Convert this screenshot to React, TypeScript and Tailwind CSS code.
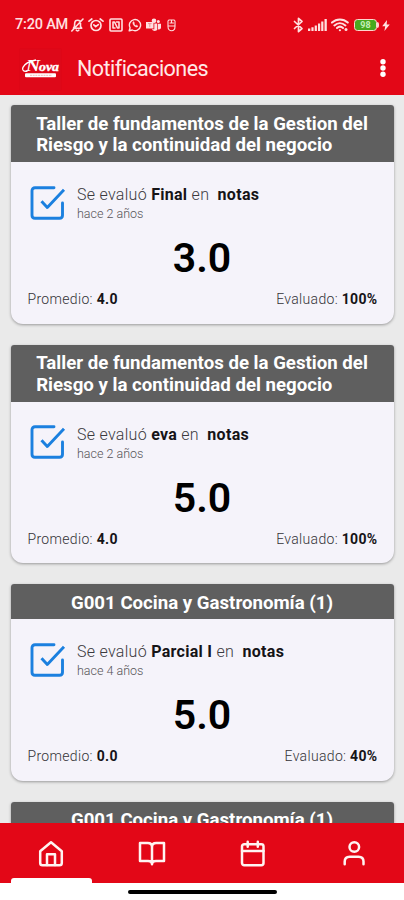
import React from "react";

type Note = {
  course: string[];
  item: string;
  when: string;
  grade: string;
  average: string;
  evaluated: string;
};

const taller = ["Taller de fundamentos de la Gestion del", "Riesgo y la continuidad del negocio"];
const cocina = ["G001 Cocina y Gastronomía (1)"];

const notes: Note[] = [
  { course: taller, item: "Final", when: "hace 2 años", grade: "3.0", average: "4.0", evaluated: "100%" },
  { course: taller, item: "eva", when: "hace 2 años", grade: "5.0", average: "4.0", evaluated: "100%" },
  { course: cocina, item: "Parcial I", when: "hace 4 años", grade: "5.0", average: "0.0", evaluated: "40%" },
  { course: cocina, item: "Parcial I", when: "hace 4 años", grade: "5.0", average: "0.0", evaluated: "40%" },
];

const stroke = {
  fill: "none",
  stroke: "currentColor",
  strokeLinecap: "round" as const,
  strokeLinejoin: "round" as const,
};

function StatusBar() {
  return (
    <div className="flex h-[49px] items-end justify-between pr-[14px] pb-[15px] pl-[15px] text-[#ffe0e0]">
      <div className="flex h-[18px] items-center">
        <span className="w-[56px] text-[14.5px] leading-[18px] font-medium tracking-[-0.2px] whitespace-nowrap">7:20 AM</span>
        <svg className="h-[14px] w-[13px]" viewBox="0 0 13 14" {...stroke} strokeWidth="1.6">
          <path d="M2.5 10.2h8.2L9.5 8.5V5.2c0-3.7-5.4-4-5.8-.2L3.5 8.3zM5.3 12.2c.6 1 1.9 1 2.5 0M.8 13 12 1" />
        </svg>
        <svg className="ml-[4px] h-[14px] w-[16px]" viewBox="0 0 16 14" {...stroke} strokeWidth="1.7">
          <circle cx="8" cy="7.5" r="5" />
          <path d="M1 3.2 3.8 1M15 3.2 12.2 1M5.8 6.8 7.7 8.6l2.6-2" />
        </svg>
        <svg className="ml-[5px] h-[14px] w-[14px]" viewBox="0 0 14 14" {...stroke} strokeWidth="1.6">
          <rect x="1" y="1" width="12" height="12" rx="1" />
          <path d="M4 10V4h1.5L8.5 10H10V4H7.5M4 10h2" />
        </svg>
        <svg className="ml-[5px] h-[14px] w-[14px]" viewBox="0 0 14 14" {...stroke} strokeWidth="1.4">
          <path d="m1.2 12.8.9-3A5.6 5.6 0 1 1 4.3 12z" />
          <path d="M5 4.2c-.8 2 1.8 5 4.2 4.8L9.8 8 8.4 7.2l-.8.6L6 6.1l.4-.8L5.9 4z" fill="currentColor" strokeWidth=".6" />
        </svg>
        <svg className="ml-[4px] h-[14px] w-[15px]" viewBox="0 0 15 14" fill="currentColor">
          <circle cx="8" cy="2.8" r="2.3" />
          <circle cx="12.3" cy="3.6" r="1.5" />
          <path d="M0 4h7.5v6.5H0zM8.3 5.6h3v6.2c-1 1.6-4.3 1.7-5.4-.5h2.4zM12 5.8h3v4c-.3 1.4-1.8 2-3 1.4z" />
          <path d="M2 5.6h3.6M3.8 5.6v3.6" stroke="#e88088" strokeWidth=".8" />
        </svg>
        <svg className="ml-[6px] h-[13px] w-[9px]" viewBox="0 0 9 13" {...stroke} strokeWidth="1.1">
          <path d="M1.8 1h5.4l.8 1v5.5C8 13.2 1 13.2 1 7.5V2zM3 4h3.5M1.5 7h6M4.5 1v3" />
        </svg>
      </div>
      <div className="flex h-[18px] items-center">
        <svg className="h-[16px] w-[11px]" viewBox="0 0 11 16" {...stroke} strokeWidth="1.7">
          <path d="m1.5 4.5 7.5 7-3.5 3.2V1.3L9 4.5l-7.5 7" />
        </svg>
        <svg className="ml-[4px] h-[12px] w-[19px]" viewBox="0 0 19 12" fill="currentColor">
          <path d="M0 9.5h2.3V12H0zM3.4 8.2h2.2V12H3.4zM6.7 6.5h2.2V12H6.7zM10 4.6h2.2V12H10zM13.2 2.4h2.2V12h-2.2zM16.5 0h2.3v12h-2.3z" />
        </svg>
        <svg className="ml-[4px] h-[14px] w-[18px]" viewBox="0 0 18 14" {...stroke} strokeWidth="2">
          <path d="M1 4.6c4.6-4.3 11.2-4.3 15.8 0M3.4 7.4c3.2-3 7.7-3 11 0M6 10c1.8-1.7 4.2-1.7 6 0M8.8 12.3h.2" />
          <circle cx="15" cy="11.6" r="1.5" fill="currentColor" strokeWidth="0" />
        </svg>
        <div className="ml-[5px] flex h-[12px] w-[23px] items-center justify-center rounded-[3.5px] border-[1.5px] border-[#ffd5cf] bg-[#48a81e] text-[9px] leading-none font-bold text-[#c3eeb9]">
          98
        </div>
        <div className="h-[6px] w-[2px] rounded-r-[2px] bg-[#ffd5cf]" />
        <svg className="ml-[3px] h-[11px] w-[8px]" viewBox="0 0 8 11" fill="currentColor">
          <path d="M5 0 .2 6.3h3L2.4 11 7.8 4.5H4.7z" />
        </svg>
      </div>
    </div>
  );
}

function Logo() {
  return (
    <div className="flex h-[41px] w-[41px] shrink-0 flex-col items-center justify-center bg-[#de0819] shadow-[0_0_1px_#cf0817]">
      <svg className="h-[22px] w-[41px]" viewBox="0 0 41 22">
        <text
          x="6"
          y="13.3"
          textLength="14"
          lengthAdjust="spacingAndGlyphs"
          className="fill-white font-['Liberation_Serif',serif] text-[17px] font-bold italic"
        >
          N
        </text>
        <text
          x="19"
          y="13"
          textLength="20"
          lengthAdjust="spacingAndGlyphs"
          className="fill-white stroke-white stroke-[0.4px] font-['Liberation_Serif',serif] text-[13px] font-bold italic"
        >
          ova
        </text>
        <path d="M7.5 13C-.5 15 .5 5 16 2" fill="none" stroke="#fff" strokeWidth="1.3" />
        <rect x="5" y="15.3" width="31" height="4" rx="1" fill="#fff" />
        <path d="M10 17.3h22" stroke="#f3a3a6" strokeWidth=".8" strokeDasharray="2 .7" />
      </svg>
    </div>
  );
}

function CheckIcon() {
  return (
    <svg className="mt-[0.5px] h-[34px] w-[36px] text-[#1b80df]" viewBox="0 0 36 34" {...stroke} strokeWidth="2.9">
      <path d="M24 1.8H5c-1.8 0-3 1.2-3 3v24.4c0 1.8 1.2 3 3 3h24.5c1.8 0 3-1.2 3-3V17" />
      <path d="m11.5 15.2 5.8 6.2L34 3.8" strokeLinecap="butt" />
    </svg>
  );
}

function NoteCard({ note }: { note: Note }) {
  return (
    <article className="shrink-0 overflow-hidden rounded-t-[3px] rounded-b-[12px] bg-[#f5f3fa] shadow-[0_1px_3px_rgba(0,0,0,0.35)]">
      <h2 className="flex justify-center bg-[#5f5f5f] pt-[8.5px] pb-[5px] text-[18.65px] leading-[21.75px] font-bold whitespace-nowrap text-white">
        <span>
          {note.course.map((line) => (
            <span key={line} className="block">{line}</span>
          ))}
        </span>
      </h2>
      <div className="flex h-[161.5px] flex-col">
        <div className="flex h-[64px] items-start pt-[23px] pl-[19px]">
          <CheckIcon />
          <div className="pl-[11.5px] text-[#3b3a3e]">
            <p className="text-[16px] leading-[20px] font-light tracking-[0.29px] whitespace-pre">
              Se evaluó <b className="font-bold text-[#151417]">{note.item}</b> en{"  "}
              <b className="font-bold text-[#151417]">notas</b>
            </p>
            <p className="text-[12.5px] leading-[17px] font-light text-[#555458]">{note.when}</p>
          </div>
        </div>
        <p className="h-[63px] pt-[8px] text-center text-[41px] leading-[48px] font-semibold text-black">{note.grade}</p>
        <div className="flex justify-between pr-[16px] pl-[17px] text-[14px] leading-[20px] font-light tracking-[0.33px] text-[#333236]">
          <span>Promedio: <b className="font-bold text-[#151417]">{note.average}</b></span>
          <span>Evaluado: <b className="font-bold text-[#151417]">{note.evaluated}</b></span>
        </div>
      </div>
    </article>
  );
}

function BottomNav() {
  return (
    <nav className="grid h-[60px] shrink-0 grid-cols-4 bg-[#e30717] text-[#fff3f1]">
      <div className="flex flex-col items-center justify-between pt-[17px]">
        <svg className="h-[27px] w-[26px]" viewBox="0 0 26 27" {...stroke} strokeWidth="2.5">
          <path d="M2.2 11.2 13 2.3l10.8 8.9V23c0 1.5-.8 2.3-2.3 2.3h-17c-1.5 0-2.3-.8-2.3-2.3z" />
          <path d="M9 25V14.2h8V25" />
        </svg>
        <div className="ml-[2px] h-[5px] w-[81px] rounded-t-[3px] bg-white" />
      </div>
      <div className="flex justify-center pt-[18px]">
        <svg className="h-[25px] w-[28px]" viewBox="0 0 28 25" {...stroke} strokeWidth="2.5">
          <path d="M14 6c0-2.5-1.7-4-4.2-4H2v18h8c2.5 0 4 1 4 3.3V6c0-2.5 1.7-4 4.2-4H26v18h-8c-2.5 0-4 1-4 3.3" />
        </svg>
      </div>
      <div className="flex justify-center pt-[17px]">
        <svg className="h-[27px] w-[25px]" viewBox="0 0 25 27" {...stroke} strokeWidth="2.5">
          <rect x="2" y="4.3" width="21.5" height="21" rx="2.2" />
          <path d="M2 11h21.5M7.7 1.8v5M17.8 1.8v5" />
        </svg>
      </div>
      <div className="flex justify-center pt-[17px]">
        <svg className="h-[27px] w-[24px]" viewBox="0 0 24 27" {...stroke} strokeWidth="2.5">
          <circle cx="12.3" cy="7" r="4.8" />
          <path d="M2.7 24.3v-2.8c0-3 2-4.8 5-4.8h8.8c3 0 5 1.8 5 4.8v2.8" />
        </svg>
      </div>
    </nav>
  );
}

export default function App() {
  return (
    <div className="flex h-[900px] w-[404px] flex-col overflow-hidden bg-white font-[Roboto,sans-serif]">
      <header className="h-[95px] shrink-0 bg-[#e30717]">
        <StatusBar />
        <div className="flex h-[40px] items-center pr-[16px] pl-[20px]">
          <Logo />
          <h1 className="ml-[16px] grow text-[21.5px] leading-[30px] font-normal tracking-[-0.54px] text-[#ffe9e7]">Notificaciones</h1>
          <svg className="h-[20px] w-[10px]" viewBox="0 0 10 20" fill="#fff">
            <circle cx="5" cy="2.7" r="2.7" />
            <circle cx="5" cy="9" r="2.7" />
            <circle cx="5" cy="15.3" r="2.7" />
          </svg>
        </div>
      </header>
      <main className="flex min-h-0 grow flex-col gap-[21px] overflow-hidden bg-[#eaeaea] px-[10.5px] pt-[10px]">
        {notes.map((note, i) => (
          <NoteCard key={i} note={note} />
        ))}
      </main>
      <BottomNav />
      <footer className="flex h-[17px] shrink-0 justify-center bg-white pt-[7px]">
        <div className="h-[3.5px] w-[149px] rounded-full bg-black" />
      </footer>
    </div>
  );
}
